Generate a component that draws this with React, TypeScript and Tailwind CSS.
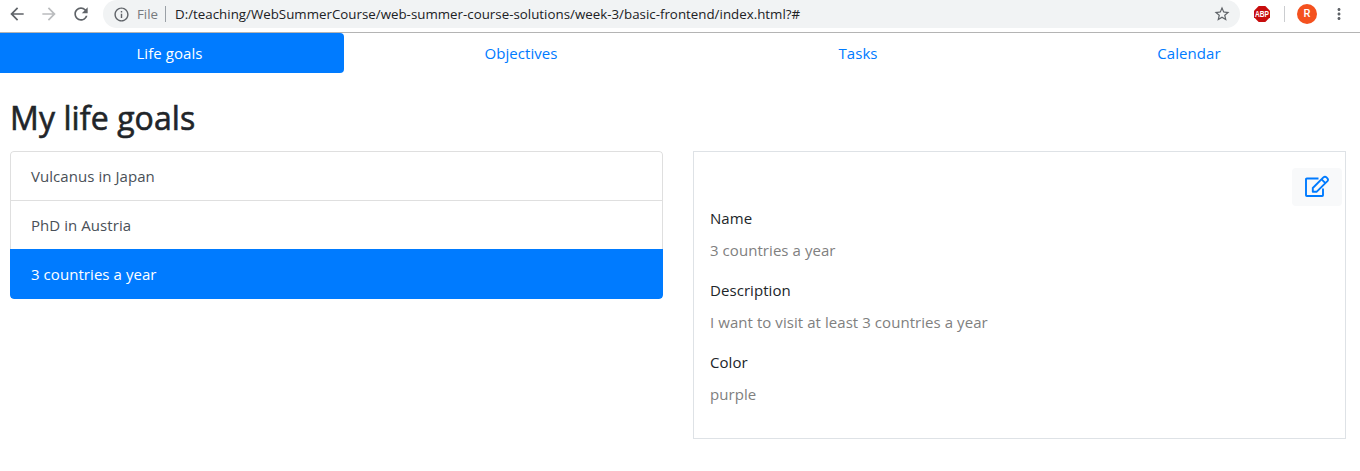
import { MdArrowBack, MdArrowForward, MdInfoOutline, MdMoreVert, MdRefresh, MdStarBorder } from "react-icons/md";

const goals = ["Vulcanus in Japan", "PhD in Austria", "3 countries a year"];

const details = [
  { label: "Name", value: "3 countries a year" },
  { label: "Description", value: "I want to visit at least 3 countries a year" },
  { label: "Color", value: "purple" },
];

function EditIcon() {
  return (
    <svg width="26" height="24" viewBox="0 0 26 24" fill="none" stroke="currentColor" strokeWidth="1.9" strokeLinejoin="round">
      <path d="M14.5 3.5H2.8Q2 3.5 2 4.3V20.2Q2 21 2.8 21H18.2Q19 21 19 20.2V13.5" />
      <path d="M8.8 16.7V13L19.4 2.4Q21 1 22.5 2.4L23.4 3.3Q24.6 4.7 23.4 6.1L12.8 16.7Z" />
      <path d="M17.6 4.4L21.4 8.2" />
    </svg>
  );
}

function BrowserBar() {
  return (
    <header className="flex h-[33px] items-start border-b border-[#b4b4b4] bg-white tracking-normal">
      <div className="flex h-7 w-[103px] shrink-0 items-center gap-3 pl-[7px] text-[#5f6368]">
        <MdArrowBack size={20} />
        <MdArrowForward size={20} className="text-[#babcbe]" />
        <MdRefresh size={20} />
      </div>
      <div className="flex h-7 w-[1137px] shrink-0 items-center rounded-r-full rounded-l-full bg-[#f1f3f4] pl-[10px] pr-[9px] text-[13.3px]">
        <MdInfoOutline size={17} className="text-[#5f6368]" />
        <span className="ml-[7px] w-[21px] whitespace-nowrap text-[#777a7e]">File</span>
        <span className="ml-[7px] h-4 w-px bg-[#9aa0a6]" />
        <span className="ml-[9px] whitespace-nowrap tracking-[0.015px] text-[#202124]">
          D:/teaching/WebSummerCourse/web-summer-course-solutions/week-3/basic-frontend/index.html?#
        </span>
        <MdStarBorder size={18} className="ml-auto text-[#5f6368]" />
      </div>
      <div className="flex h-7 items-center pl-[14px]">
        <svg width="16" height="16" viewBox="0 0 16 16" className="overflow-visible">
          <path d="M4.7 0h6.6L16 4.7v6.6L11.3 16H4.7L0 11.3V4.7z" fill="#c70d0d" />
          <text x="1" y="11" textLength="14" lengthAdjust="spacingAndGlyphs" letterSpacing="0" fontFamily="Liberation Sans, sans-serif" fontSize="8.4" fontWeight="700" fill="#fff">ABP</text>
        </svg>
        <span className="ml-[14px] h-4 w-px bg-[#cbcdd0]" />
        <span className="ml-3 flex size-5 items-center justify-center rounded-full bg-[#f4511e] font-['Roboto',sans-serif] text-[11px] font-medium text-white">R</span>
        <MdMoreVert size={18} className="ml-[13px] text-[#5f6368]" />
      </div>
    </header>
  );
}

export default function App() {
  return (
    <div className="h-[471px] w-[1360px] overflow-hidden bg-white font-['Open_Sans',sans-serif] text-[15px] leading-6 tracking-[0.06px] text-[#212529]">
      <BrowserBar />
      <nav className="-ml-[5px] flex h-10 text-center text-[#007bff]">
        <a className="w-[349px] rounded bg-[#007bff] py-2 text-white">Life goals</a>
        <a className="w-[354px] py-2">Objectives</a>
        <a className="w-[320px] py-2">Tasks</a>
        <a className="w-[342px] py-2">Calendar</a>
      </nav>
      <main className="pt-[26px] pl-[10px]">
        <h1 className="text-[32px] leading-[38px] font-normal tracking-[0.1px] [-webkit-text-stroke:0.6px_#212529]">My life goals</h1>
        <div className="mt-[14px] flex items-start gap-[30px]">
          <ul className="w-[653px] overflow-hidden rounded">
            {goals.map((goal, index) => (
              <li
                key={goal}
                className={
                  index === 2
                    ? "h-[50px] rounded-b bg-[#007bff] px-[21px] py-[13px] text-white"
                    : index === 0
                      ? "h-[49px] rounded-t border border-b-0 border-[#dfdfdf] px-5 py-3 text-[#495057]"
                      : "h-[49px] border border-b-0 border-[#dfdfdf] px-5 py-3 text-[#495057]"
                }
              >
                {goal}
              </li>
            ))}
          </ul>
          <section className="h-[288px] w-[653px] border border-[#dee2e6] pt-4 pl-4">
            <div className="flex h-[38px] justify-end pr-[3px]">
              <button className="flex h-[38px] w-[50px] items-center justify-center rounded bg-[#f8f9fa] text-[#007bff]">
                <EditIcon />
              </button>
            </div>
            <dl>
              {details.map(({ label, value }) => (
                <div key={label} className="mb-2 h-16">
                  <dt className="h-8">{label}</dt>
                  <dd className="h-8 text-[#808080]">{value}</dd>
                </div>
              ))}
            </dl>
          </section>
        </div>
      </main>
    </div>
  );
}
